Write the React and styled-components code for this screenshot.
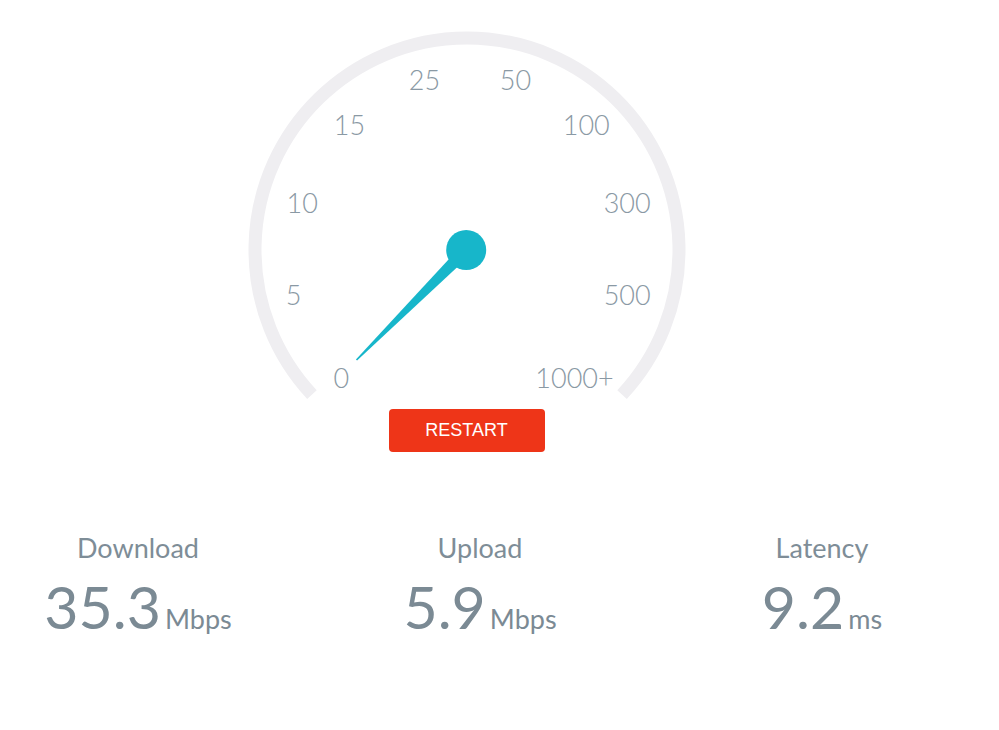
import styled, { createGlobalStyle } from "styled-components";

const GlobalStyle = createGlobalStyle`
    html, body {
        margin: 0;
        padding: 0;
        background: #ffffff;
    }
    body {
        font-family: 'Lato', 'Open Sans', sans-serif;
    }
`;

const CX = 230;
const CY = 230;
const R = 212;
const END_ANGLE = 43;

const labels = [
    { text: "0", x: 104.3, y: 358 },
    { text: "5", x: 56.5, y: 275 },
    { text: "10", x: 65.2, y: 183 },
    { text: "15", x: 112.5, y: 105 },
    { text: "25", x: 187.5, y: 60 },
    { text: "50", x: 278.5, y: 60 },
    { text: "100", x: 349.3, y: 105 },
    { text: "300", x: 390.2, y: 183 },
    { text: "500", x: 390.2, y: 275 },
    { text: "1000+", x: 337.5, y: 358 },
];

const stats = [
    { label: "Download", value: "35.3", unit: "Mbps" },
    { label: "Upload", value: "5.9", unit: "Mbps" },
    { label: "Latency", value: "9.2", unit: "ms" },
];

function arcPath(){
    const rad = (END_ANGLE * Math.PI) / 180;
    const dx = R * Math.cos(rad);
    const dy = R * Math.sin(rad);
    return `M ${CX - dx} ${CY + dy} A ${R} ${R} 0 1 1 ${CX + dx} ${CY + dy}`;
}

function Gauge(){
    // needle points from hub down-left towards "0"
    const hub = { x: 229.2, y: 230 };
    const tip = { x: 119.5, y: 340 };
    const len = Math.hypot(tip.x - hub.x, tip.y - hub.y);
    const nx = -(tip.y - hub.y) / len;
    const ny = (tip.x - hub.x) / len;
    const half = 6.5;
    const needle = `${hub.x + nx * half},${hub.y + ny * half} ${hub.x - nx * half},${hub.y - ny * half} ${tip.x - nx * 0.8},${tip.y - ny * 0.8} ${tip.x + nx * 0.8},${tip.y + ny * 0.8}`;

    return(
        <GaugeSvg width="460" height="389" viewBox="0 0 460 389">
            <path d={arcPath()} fill="none" stroke="#EFEEF1" strokeWidth="13" />
            {labels.map((l) => (
                <Tick key={l.text} x={l.x} y={l.y + 10} textAnchor="middle">{l.text}</Tick>
            ))}
            <polygon points={needle} fill="#17B6CA" />
            <circle cx={hub.x} cy={hub.y} r="20" fill="#17B6CA" />
        </GaugeSvg>
    );
}

export default function App(){
    return(
    <>
        <GlobalStyle />
        <Page>
            <Stage>
                <Gauge />
                <RestartBtn>RESTART</RestartBtn>
            </Stage>
            <Stats>
                {stats.map((s) => (
                    <Stat key={s.label}>
                        <StatLabel>{s.label}</StatLabel>
                        <ValueRow>
                            <Value>{s.value}</Value>
                            <Unit>{s.unit}</Unit>
                        </ValueRow>
                    </Stat>
                ))}
            </Stats>
        </Page>
    </>
    );
}


const Page = styled.div`
    width: 999px;
    height: 730px;
    background-color: #ffffff;
    padding-top: 20px;
    box-sizing: border-box;
`;

const Stage = styled.div`
    width: 933px;
    display: flex;
    flex-direction: column;
    align-items: center;
`;

const GaugeSvg = styled.svg`
    display: block;
    overflow: visible;
`;

const Tick = styled.text`
    font-family: 'Lato', sans-serif;
    font-weight: 300;
    font-size: 27px;
    fill: #8A99A4;
`;

const RestartBtn = styled.button`
    width: 156px;
    height: 43px;
    border: none;
    border-radius: 4px;
    background-color: #EE3518;
    color: #ffffff;
    font-family: 'Liberation Sans', Arial, sans-serif;
    font-size: 18px;
    padding: 0;
    cursor: pointer;
`;

const Stats = styled.div`
    display: grid;
    grid-template-columns: repeat(3, 200px);
    column-gap: 142px;
    padding-left: 38px;
    margin-top: 82px;
`;

const Stat = styled.div`
    display: flex;
    flex-direction: column;
    align-items: center;
`;

const StatLabel = styled.div`
    font-family: 'Lato', sans-serif;
    font-weight: 400;
    font-size: 27px;
    line-height: 27px;
    color: #7E8D97;
`;

const ValueRow = styled.div`
    display: flex;
    align-items: baseline;
    justify-content: center;
    margin-top: 16px;
`;

const Value = styled.span`
    font-family: 'Lato', sans-serif;
    font-weight: 400;
    font-size: 59px;
    line-height: 59px;
    color: #7B8A94;
`;

const Unit = styled.span`
    font-family: 'Lato', sans-serif;
    font-weight: 400;
    font-size: 27px;
    margin-left: 4px;
    color: #7B8A94;
`;
